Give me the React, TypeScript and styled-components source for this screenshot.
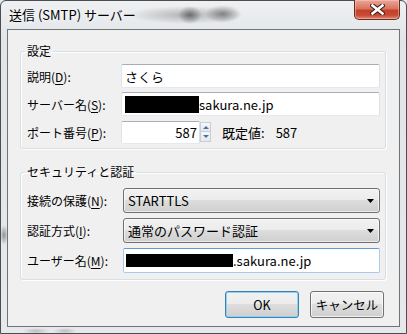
import styled, { createGlobalStyle } from 'styled-components';

const GlobalStyle = createGlobalStyle`
  html, body {
    margin: 0;
    padding: 0;
    background: #e6e8eb;
  }
  body {
    font-family: "Noto Sans CJK JP", "Noto Sans", sans-serif;
    font-size: 12px;
    color: #000;
  }
`;

const CloseIcon = () => (
  <svg width="15" height="11" viewBox="0 0 15 11">
    <path d="M2.5 1.5L12.5 9.5M12.5 1.5L2.5 9.5" stroke="#3b1c16" strokeWidth="4.6" strokeLinecap="square" />
    <path d="M2.5 1.5L12.5 9.5M12.5 1.5L2.5 9.5" stroke="#ffffff" strokeWidth="2.6" strokeLinecap="square" />
  </svg>
);

const DropArrow = () => (
  <svg width="7" height="4" viewBox="0 0 7 4">
    <path d="M0 0h7L3.5 4z" fill="#000" />
  </svg>
);

export default function App() {
  return (
    <>
      <GlobalStyle />
      <Window>
        <TitleBar>
          <Title>送信 (SMTP) サーバー</Title>
          <CloseButton>
            <CloseIcon />
          </CloseButton>
        </TitleBar>
        <Client>
          <GroupBox $top={5} $bottom={4}>
            <Legend>設定</Legend>
            <FormGrid $label={94} $row={24} $gap={4}>
              <Label>
                説明(<u>D</u>):
              </Label>
              <TextBox>さくら</TextBox>
              <Label>
                サーバー名(<u>S</u>):
              </Label>
              <TextBox>
                <Redacted $w={74} $h={17} />
                sakura.ne.jp
              </TextBox>
              <Label>
                ポート番号(<u>P</u>):
              </Label>
              <PortRow>
                <NumberBox>587</NumberBox>
                <Spinner>
                  <SpinButton $dir="up" />
                  <SpinButton $dir="down" />
                </Spinner>
                <DefaultText>既定値:</DefaultText>
                <DefaultText>587</DefaultText>
              </PortRow>
            </FormGrid>
          </GroupBox>

          <GroupBox $top={8} $bottom={6} $mt={15}>
            <Legend>セキュリティと認証</Legend>
            <FormGrid $label={96} $row={25} $gap={5}>
              <Label>
                接続の保護(<u>N</u>):
              </Label>
              <ComboBox>
                STARTTLS
                <DropArrow />
              </ComboBox>
              <Label>
                認証方式(<u>I</u>):
              </Label>
              <ComboBox>
                通常のパスワード認証
                <DropArrow />
              </ComboBox>
              <Label>
                ユーザー名(<u>M</u>):
              </Label>
              <TextBox $focused>
                <Redacted $w={107} $h={13} $ml={-1} />
                .sakura.ne.jp
              </TextBox>
            </FormGrid>
          </GroupBox>

          <ButtonRow>
            <Button $default>OK</Button>
            <Button>キャンセル</Button>
          </ButtonRow>
        </Client>
      </Window>
    </>
  );
}

const Window = styled.div`
  box-sizing: border-box;
  width: 407px;
  height: 334px;
  display: flex;
  flex-direction: column;
  padding: 0 6px 6px;
  border: 1px solid #4a4d52;
  border-radius: 6px 6px 0 0;
  background:
    radial-gradient(ellipse 12px 9px at 189px 14px, rgba(60, 60, 60, 0.6), transparent),
    radial-gradient(ellipse 18px 9px at 222px 13px, rgba(60, 60, 60, 0.55), transparent),
    radial-gradient(ellipse 58px 9px at 185px 14px, rgba(110, 110, 110, 0.45), transparent),
    radial-gradient(ellipse 4px 10px at 3px 234px, rgba(60, 60, 60, 0.5), transparent),
    radial-gradient(ellipse 14px 3px at 35px 330px, rgba(120, 120, 120, 0.4), transparent),
    radial-gradient(ellipse 12px 3px at 64px 330px, rgba(120, 120, 120, 0.4), transparent),
    linear-gradient(#eef0f2, #e2e5e8 40px, #e6e8eb);
`;

const TitleBar = styled.div`
  height: 28px;
  display: flex;
  justify-content: space-between;
  align-items: flex-start;
`;

const Title = styled.div`
  padding-left: 2px;
  line-height: 27px;
  font-size: 13px;
  color: #000;
  text-shadow: 0 0 6px #ffffff;
`;

const CloseButton = styled.div`
  box-sizing: border-box;
  width: 46px;
  height: 20px;
  margin-top: -1px;
  display: flex;
  align-items: center;
  justify-content: center;
  border: 1px solid #6b2a20;
  border-top: none;
  border-radius: 0 0 5px 5px;
  background: linear-gradient(#e9a899 0%, #d9745f 45%, #c4412a 55%, #c84a33 80%, #dd8a73 100%);
  box-shadow: inset 0 0 0 1px rgba(255, 210, 200, 0.45);
`;

const Client = styled.div`
  flex: 1;
  display: flex;
  flex-direction: column;
  padding: 13px 13px 7px 12px;
  border: 1px solid #707378;
  background: #f0f0f0;
`;

const GroupBox = styled.fieldset<{ $top: number; $bottom: number; $mt?: number }>`
  margin: ${({ $mt }) => $mt || 0}px 0 0;
  padding: ${({ $top }) => $top}px 5px ${({ $bottom }) => $bottom}px 6px;
  min-width: 0;
  border: 1px solid #d5dfe5;
  border-radius: 3px;
  box-shadow: inset 1px 1px 0 #ffffff, 1px 1px 0 #ffffff;
`;

const Legend = styled.legend`
  margin-left: -2px;
  padding: 0 2px;
  line-height: 16px;
  font-size: 12px;
`;

const FormGrid = styled.div<{ $label: number; $row: number; $gap: number }>`
  display: grid;
  grid-template-columns: ${({ $label }) => $label}px 1fr;
  grid-auto-rows: ${({ $row }) => $row}px;
  row-gap: ${({ $gap }) => $gap}px;
  align-items: center;
`;

const Label = styled.div`
  font-size: 12px;
  white-space: nowrap;
  u {
    text-decoration-thickness: 1px;
    text-underline-offset: 2px;
  }
`;

const TextBox = styled.div<{ $focused?: boolean }>`
  box-sizing: border-box;
  height: 100%;
  display: flex;
  align-items: center;
  padding: 0 3px;
  font-size: 13px;
  background: #ffffff;
  border: 1px solid;
  border-color: ${({ $focused }) =>
    $focused ? '#5c9bd8 #a7cbec #a7cbec #a7cbec' : '#abadb3 #dbdfe6 #e3e9ef #e2e3ea'};
  border-radius: 2px;
  white-space: nowrap;
`;

const Redacted = styled.span<{ $w: number; $h: number; $ml?: number }>`
  display: inline-block;
  width: ${({ $w }) => $w}px;
  height: ${({ $h }) => $h}px;
  margin-left: ${({ $ml }) => $ml || 0}px;
  background: #000;
`;

const PortRow = styled.div`
  display: flex;
  align-items: center;
  height: 100%;
`;

const NumberBox = styled.div`
  box-sizing: border-box;
  width: 79px;
  height: 23px;
  display: flex;
  align-items: center;
  justify-content: flex-end;
  padding-right: 2px;
  font-size: 13px;
  background: #ffffff;
  border: 1px solid;
  border-color: #abadb3 #dbdfe6 #e3e9ef #e2e3ea;
  border-radius: 2px 0 0 2px;
`;

const Spinner = styled.div`
  display: flex;
  flex-direction: column;
  width: 11px;
`;

const SpinButton = styled.div<{ $dir: 'up' | 'down' }>`
  box-sizing: border-box;
  height: 10px;
  display: flex;
  align-items: center;
  justify-content: center;
  border: 1px solid #c9ced6;
  ${({ $dir }) => ($dir === 'down' ? 'border-top: none;' : '')}
  background: linear-gradient(#f7f8fa, #e4e7ec);
  &::after {
    content: '';
    width: 0;
    height: 0;
    border-left: 3px solid transparent;
    border-right: 3px solid transparent;
    ${({ $dir }) =>
      $dir === 'up' ? 'border-bottom: 3px solid #4d6fa8;' : 'border-top: 3px solid #4d6fa8;'}
  }
`;

const DefaultText = styled.span`
  margin-left: 11px;
  font-size: 13px;
`;

const ComboBox = styled.div`
  box-sizing: border-box;
  height: 100%;
  display: flex;
  align-items: center;
  justify-content: space-between;
  padding: 0 5px 0 4px;
  font-size: 13px;
  border: 1px solid #707070;
  border-radius: 3px;
  background: linear-gradient(#f2f2f2 0%, #ebebeb 50%, #dddddd 50%, #cfcfcf 100%);
  box-shadow: inset 0 0 0 1px rgba(255, 255, 255, 0.6);
  white-space: nowrap;
`;

const ButtonRow = styled.div`
  display: flex;
  justify-content: flex-end;
  gap: 11px;
  margin-top: 11px;
  padding-right: 2px;
`;

const Button = styled.button<{ $default?: boolean }>`
  box-sizing: border-box;
  width: 74px;
  height: 27px;
  padding: 0;
  font-family: "Noto Sans CJK JP", "Noto Sans", sans-serif;
  font-size: 12.5px;
  color: #000;
  border: 1px solid ${({ $default }) => ($default ? '#3c7fb1' : '#707070')};
  border-radius: 3px;
  background: linear-gradient(#f2f2f2 0%, #ebebeb 50%, #dddddd 50%, #cfcfcf 100%);
  box-shadow: inset 0 0 0 1px
    ${({ $default }) => ($default ? '#8fd2f5' : 'rgba(255, 255, 255, 0.7)')};
`;
